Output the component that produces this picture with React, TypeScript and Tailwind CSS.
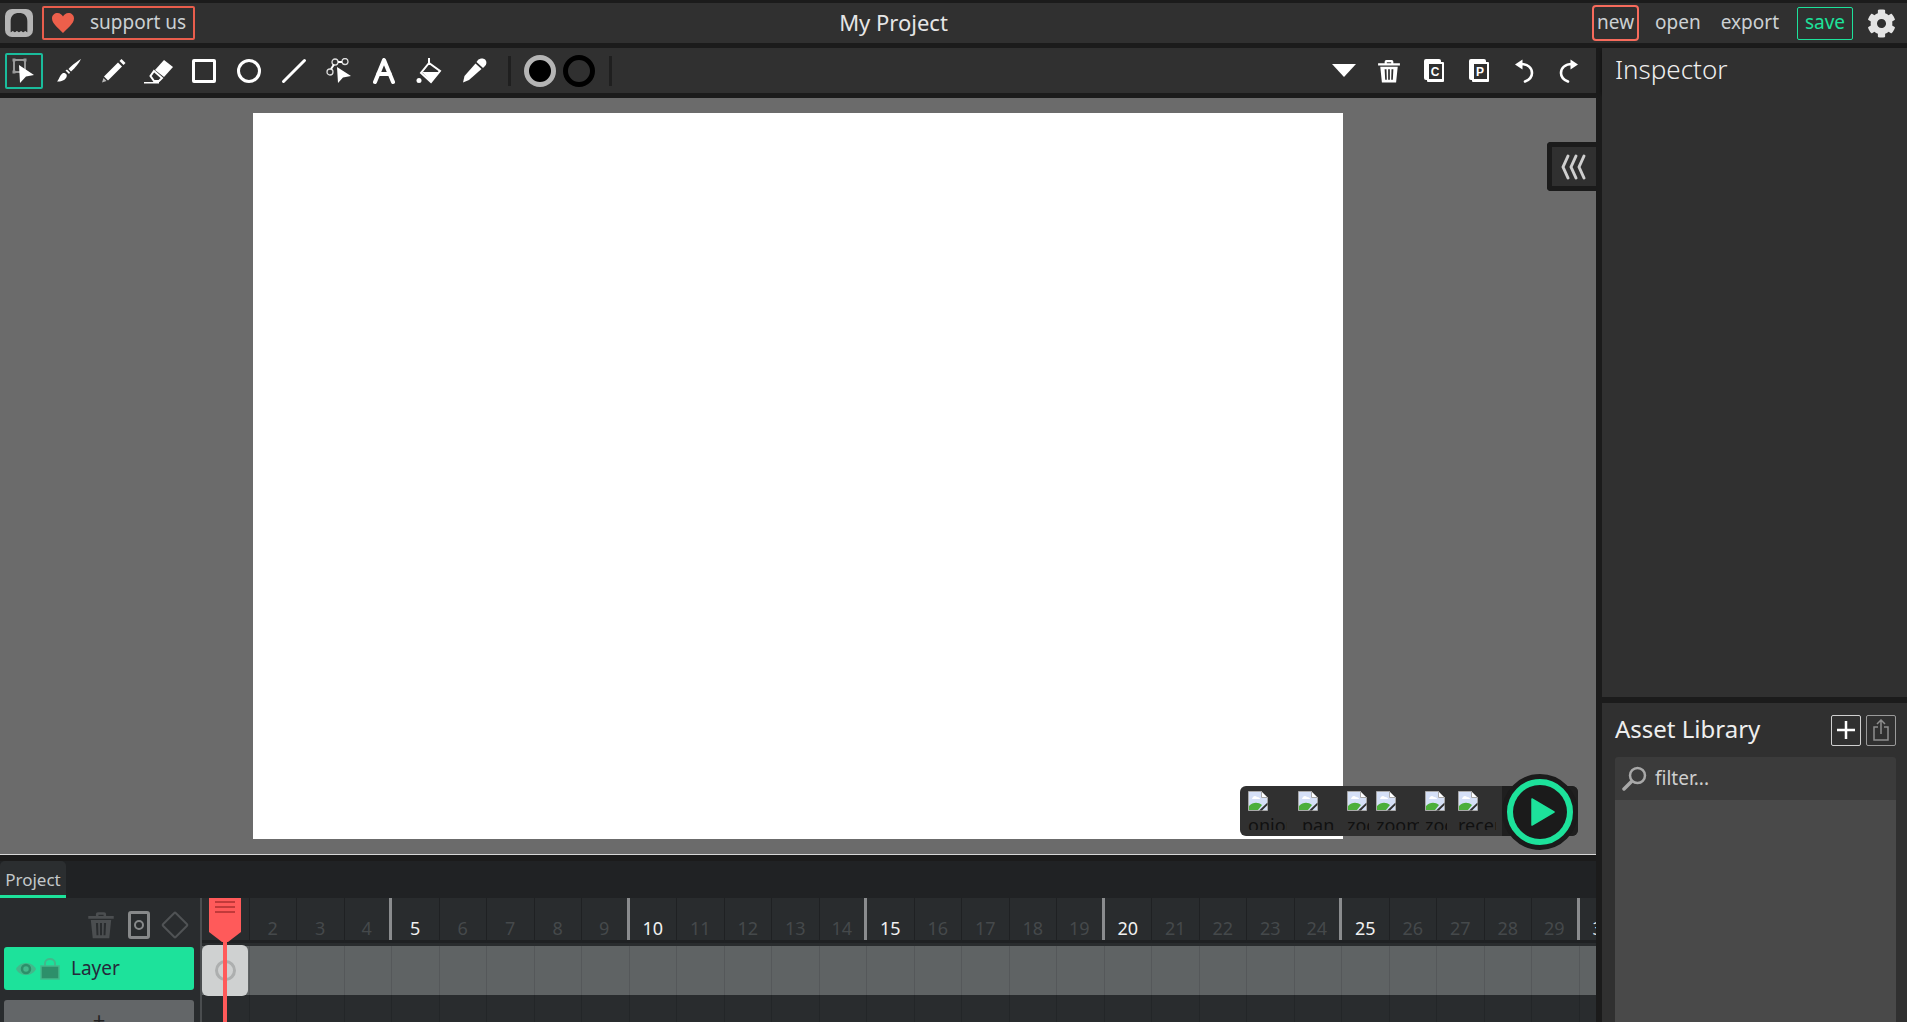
import { FaCog } from "react-icons/fa";

const font = "font-['Noto_Sans','Lato',sans-serif]";

function SelectIcon() {
  return (
    <svg width="24" height="26" viewBox="0 0 24 26" fill="none">
      <rect x="2" y="2" width="11" height="12" stroke="#ddd" strokeWidth="1.2" />
      <path d="M7 7 L22 17 L14 18.5 L8 25 Z" fill="#fff" />
      <rect x="0.5" y="0.5" width="3" height="3" fill="#999" />
      <rect x="11.5" y="0.5" width="3" height="3" fill="#999" />
      <rect x="0.5" y="12.5" width="3" height="3" fill="#999" />
    </svg>
  );
}

function BrushIcon() {
  return (
    <svg width="26" height="26" viewBox="0 0 26 26" fill="#fff">
      <path d="M25 1 C22 3 16 7 12.500 11 L15 13.500 C19 10 23 5 25 1 Z" />
      <path d="M9.500 12.500 L11 11.500 L14 14.500 L13 16 Z" />
      <path d="M7 15 C10 14.500 11.500 17 10.500 19 C9.500 22 5 24 1 23.500 C3 22 3.500 17 7 15 Z" />
    </svg>
  );
}

function PencilIcon() {
  return (
    <svg width="26" height="26" viewBox="0 0 26 26" fill="#fff">
      <path d="M20.500 1 L24.500 5 L22.500 7 L18.500 3 Z" />
      <path d="M17 4.500 L21 8.500 L7 22.500 L3 18.500 Z" />
      <path d="M2.500 20 L5.500 23 L1 24.500 Z" fill="#bbb" />
    </svg>
  );
}

function EraserIcon() {
  return (
    <svg width="32" height="26" viewBox="0 0 32 26" fill="#fff">
      <path d="M21 2 L30 9 L21 19 L12 12 Z" />
      <path d="M11 13 L19 20 L16 23 L11 23 L7.500 18 Z" fill="none" stroke="#fff" strokeWidth="2" />
      <path d="M1 24 H16 V25.500 H1 Z" />
    </svg>
  );
}

function PathIcon() {
  return (
    <svg width="26" height="26" viewBox="0 0 26 26" fill="none" stroke="#ddd" strokeWidth="1.3">
      <circle cx="4" cy="14" r="3" />
      <circle cx="9" cy="4" r="3" />
      <circle cx="19" cy="3.500" r="3" />
      <path d="M5 11 L8 6.500 M12 4 H16" strokeWidth="2" stroke="#fff" />
      <path d="M11 9 L25 18 L17 19.500 L12 25 Z" fill="#fff" stroke="none" />
    </svg>
  );
}

function FillIcon() {
  return (
    <svg width="26" height="28" viewBox="0 0 26 28" fill="#fff">
      <path d="M13 1 V8" stroke="#fff" strokeWidth="2" />
      <path d="M13 6 L24 14 L15 25 L5 16 Z" fill="none" stroke="#fff" strokeWidth="2" />
      <path d="M6 15 H23 L15 25 Z" />
      <circle cx="3" cy="23.500" r="2.500" />
    </svg>
  );
}

function DropperIcon() {
  return (
    <svg width="26" height="26" viewBox="0 0 26 26" fill="#fff">
      <path d="M17 2 C19 0 23 0 24.500 2 C26 4 25.500 6.500 24 8 L22 10 L15.500 4 Z" />
      <path d="M14.500 5.500 L20.500 11 L8 22 L2 24.500 L3.500 18 Z" />
    </svg>
  );
}

function TrashIcon({ color = "#fff", size = 24 }: { color?: string; size?: number }) {
  return (
    <svg width={size} height={size} viewBox="0 0 22 22" fill={color}>
      <path d="M7 2.500 A1.500 1.500 0 0 1 8.500 1 H13.500 A1.500 1.500 0 0 1 15 2.500 V4 H21 V6 H1 V4 H7 Z M9 3 V4 H13 V3 Z" fillRule="evenodd" />
      <path d="M3 7 H19 L17.500 21.500 H4.500 Z M7 9.500 L7.500 19 H9 L8.700 9.500 Z M10.200 9.500 V19 H11.800 V9.500 Z M13.300 9.500 L13 19 H14.500 L15 9.500 Z" fillRule="evenodd" />
    </svg>
  );
}

function ClipIcon({ letter }: { letter: string }) {
  return (
    <div className="relative h-[23px] w-5">
      <div className="absolute left-0 top-0 h-[21px] w-[17px] rounded-[2px] bg-white" />
      <div className="absolute bottom-0 right-0 h-[20px] w-[17px] rounded-[1px] bg-white" />
      <div className="absolute bottom-[3px] left-[5px] right-[2px] top-[5px] flex items-center justify-center bg-[#303030]">
        <span className="font-['Liberation_Sans',sans-serif] text-[12px] font-bold leading-none text-white">{letter}</span>
      </div>
    </div>
  );
}

function UndoIcon({ flip }: { flip?: boolean }) {
  return (
    <svg width="20" height="24" viewBox="0 0 20 24" fill="none" className={flip ? "-scale-x-100" : ""}>
      <path d="M7 5 C14 5 18 9 18 14 C18 18 15 21 11 22.500" stroke="#fff" strokeWidth="2.600" strokeLinecap="round" />
      <path d="M1 5.500 L8.500 0.500 V10.500 Z" fill="#fff" />
    </svg>
  );
}

function BrokenImage() {
  return (
    <svg width="20" height="20" viewBox="0 0 20 20" className="shrink-0">
      <path d="M0.500 0.500 H13.500 L19.500 6.500 V19.500 H0.500 Z" fill="#d5e0f7" stroke="#a9a9a9" />
      <path d="M13.500 0.500 V6.500 H19.500 Z" fill="#fff" stroke="#a9a9a9" />
      <path d="M4 8 C5 5 7 4 9 6 C11 6 12 7 12 8 Z" fill="#fff" />
      <path d="M1 19 V15 C5 11 10 11 14 14 L10 19 Z" fill="#4caf3a" />
      <path d="M11 19.500 L19.500 11.500 V14 L14 19.500 Z" fill="#303030" />
    </svg>
  );
}

function Tool({ children, active }: { children: React.ReactNode; active?: boolean }) {
  return (
    <div className={`flex h-9 w-[38px] shrink-0 items-center justify-center rounded-[2px] border-2 ${active ? "border-[#1abc9c]" : "border-transparent"}`}>
      {children}
    </div>
  );
}

const previews = [
  { alt: "onion", box: "ml-[8px] w-[39px] mr-[3px]", text: "" },
  { alt: "pan", box: "ml-[8px] w-[42px]", text: "ml-[4px]" },
  { alt: "zoom", box: "ml-[7px] w-[22px]", text: "" },
  { alt: "zoom", box: "ml-[7px] w-[43px] mr-[1px]", text: "" },
  { alt: "zoom", box: "ml-[5px] w-[22px]", text: "" },
  { alt: "recenter", box: "ml-[11px] w-[38px]", text: "" },
];

const frames = Array.from({ length: 31 }, (_, i) => i + 1);

function FrameCells({ line }: { line: string }) {
  return (
    <>
      {frames.map((f) => (
        <div key={f} className={`h-full w-[47.500px] shrink-0 border-r ${line}`} />
      ))}
    </>
  );
}

export default function App() {
  return (
    <div className={`${font} flex h-screen w-full flex-col overflow-hidden bg-[#1b1b1b] pt-[3px] text-[#ccd0d3]`}>
      {/* Top menu */}
      <header className="relative flex h-[40px] shrink-0 items-center bg-[#303030] pl-[5px] pr-[11px] text-[19px]">
        <div className="flex h-[28px] w-[28px] items-center justify-center rounded-[7px] bg-[#b5b5b5]">
          <svg width="18" height="20" viewBox="0 0 20 24" fill="#2b2b2b">
            <path d="M0 10 C0 3 4 0 10 0 C16 0 20 3 20 10 V23 C19 23 18.500 21.500 17.500 21.500 C16.500 21.500 16 23 15 23 C14 23 13.500 21.500 12.500 21.500 C11.500 21.500 11 23 10 23 C9 23 8.500 21.500 7.500 21.500 C6.500 21.500 6 23 5 23 C4 23 3.500 21.500 2.500 21.500 C1.500 21.500 1 23 0 23 Z" />
          </svg>
        </div>
        <div className="ml-[9px] flex h-[34px] w-[153px] items-center rounded-[2px] border-2 border-[#e85d4c] pl-[7px]">
          <svg width="24" height="22" viewBox="0 0 24 24" fill="#ec5f4b">
            <path d="M12 23 C8 18 0 13 0 7 C0 3 3 1 6 1 C9 1 11 3 12 5 C13 3 15 1 18 1 C21 1 24 3 24 7 C24 13 16 18 12 23 Z" />
          </svg>
          <span className="ml-[15px] whitespace-nowrap pb-[2px]">support us</span>
        </div>
        <div className="absolute left-0 w-[1787px] pb-[1px] text-center text-[22px] text-[#e6e6e6]">My Project</div>
        <div className="ml-auto flex items-center">
          <div className="flex h-9 w-[47px] items-center justify-center rounded-[4px] border-2 border-[#f76b5c] pb-[2px]">new</div>
          <span className="ml-4 pb-[2px]">open</span>
          <span className="ml-5 pb-[2px]">export</span>
          <div className="ml-[18px] flex h-[33px] w-[56px] items-center justify-center rounded-[2px] border border-[#1de29b] pb-[2px] text-[#1de29b]">save</div>
          <FaCog className="ml-[14px] text-[#e4e4e4]" size={29} />
        </div>
      </header>

      <div className="flex min-h-0 flex-1 gap-[6px] pt-[5px]">
        {/* Left column */}
        <div className="flex w-[1596px] shrink-0 flex-col">
          {/* Toolbar */}
          <div className="flex h-[45px] shrink-0 items-center bg-[#303030] pl-[5px] pr-[5px]">
            <Tool active><SelectIcon /></Tool>
            <div className="ml-[7px] flex items-center gap-[7px]">
              <Tool><BrushIcon /></Tool>
              <Tool><PencilIcon /></Tool>
              <Tool><EraserIcon /></Tool>
              <Tool><div className="h-[24px] w-[24px] rounded-[2px] border-[3px] border-white" /></Tool>
              <Tool><div className="h-[24px] w-[24px] rounded-full border-[3px] border-white" /></Tool>
              <Tool>
                <svg width="26" height="26" viewBox="0 0 26 26"><path d="M2.500 23.500 L23.500 2.500" stroke="#fff" strokeWidth="3" strokeLinecap="round" /></svg>
              </Tool>
              <Tool><PathIcon /></Tool>
              <Tool>
                <svg width="22" height="26" viewBox="0 0 22 26" fill="none"><path d="M2 24 L11 2 L20 24 M5 16 H17" stroke="#fff" strokeWidth="4" strokeLinecap="round" strokeLinejoin="round" /></svg>
              </Tool>
              <Tool><FillIcon /></Tool>
              <Tool><DropperIcon /></Tool>
            </div>
            <div className="ml-[15px] h-[30px] w-[3px] bg-[#1f1f1f]" />
            <div className="ml-[13px] h-[32px] w-[32px] rounded-full border-[5px] border-[#b5b5b5] bg-black" />
            <div className="ml-[7px] h-[32px] w-[32px] rounded-full border-[5px] border-black" />
            <div className="ml-[14px] h-[30px] w-[3px] bg-[#1f1f1f]" />
            <div className="ml-auto flex items-center">
              {[
                <div key="menu" className="h-0 w-0 border-x-[12px] border-t-[13px] border-x-transparent border-t-white" />,
                <TrashIcon key="trash" />,
                <ClipIcon key="copy" letter="C" />,
                <ClipIcon key="paste" letter="P" />,
                <UndoIcon key="undo" />,
                <UndoIcon key="redo" flip />,
              ].map((icon, i) => (
                <div key={i} className="flex w-[45px] items-center justify-center">{icon}</div>
              ))}
            </div>
          </div>

          {/* Stage */}
          <div className="relative mt-[5px] flex h-[757px] shrink-0 justify-center border-b border-[#d8d8d8] bg-[#6b6b6b] pt-[15px]">
            <div className="h-[726px] w-[1090px] bg-white" />
            <div className="absolute right-0 top-[44px] flex h-[49px] w-[49px] items-center justify-center rounded-l-[4px] border-[5px] border-r-0 border-[#1b1b1b] bg-[#303030]">
              <svg width="26" height="26" viewBox="0 0 26 26" fill="none" stroke="#cfcfcf" strokeWidth="3" strokeLinecap="round" strokeLinejoin="round">
                <path d="M7 2 L2 13 L7 24 M15 2 L10 13 L15 24 M23 2 L18 13 L23 24" />
              </svg>
            </div>
            {/* Playback overlay */}
            <div className="absolute left-[1240px] top-[688px] h-[50px] w-[338px] overflow-hidden rounded-[6px] bg-[#303030]">
              <div className="flex h-[44px] items-start overflow-hidden text-[18px] leading-[22px] text-[#111]">
                {previews.map((p, i) => (
                  <div key={i} className={`${p.box} flex h-full shrink-0 flex-col overflow-hidden whitespace-nowrap pt-[5px]`}>
                    <BrokenImage />
                    <span className={`${p.text} mt-[3px]`}>{p.alt}</span>
                  </div>
                ))}
              </div>
              <div className="absolute bottom-0 right-0 top-0 w-[76px] bg-[#1f1f1f]" />
            </div>
            <div className="absolute left-[1502px] top-[676px] flex h-[76px] w-[76px] items-center justify-center rounded-full border-[5px] border-[#1b1b1b] bg-[#1de29b]">
              <div className="flex h-[54px] w-[54px] items-center justify-center rounded-full bg-[#1b1b1b] pl-[5px]">
                <svg width="24" height="28" viewBox="0 0 24 28"><path d="M1 1 L23 14 L1 27 Z" fill="#1de29b" stroke="#1de29b" strokeLinejoin="round" strokeWidth="1.500" /></svg>
              </div>
            </div>
          </div>

          {/* Timeline */}
          <div className="mt-[6px] flex min-h-0 flex-1 flex-col overflow-hidden">
            <div className="flex h-[37px] shrink-0 items-end bg-[#202224]">
              <div className="flex h-[37px] w-[66px] items-center justify-center rounded-t-[5px] border-b-[3px] border-[#1de29b] bg-[#2b2e30] pt-[3px] text-[17px] text-[#c4c8ca]">Project</div>
            </div>
            <div className="flex min-h-0 flex-1 bg-[#292c2e]">
              <div className="flex w-[200px] shrink-0 flex-col pl-1 pr-[6px]">
                <div className="flex h-[49px] shrink-0 items-center justify-end gap-[13px] pr-[9px] pt-[4px]">
                  <TrashIcon color="#4b4e50" size={28} />
                  <div className="flex h-[28px] w-[22px] items-center justify-center rounded-[3px] border-[3px] border-[#87898a]">
                    <div className="h-[10px] w-[10px] rounded-full border-[2.500px] border-[#87898a]" />
                  </div>
                  <div className="ml-[2px] h-[20px] w-[20px] rotate-45 rounded-[2px] border-[2px] border-[#505355]" />
                </div>
                <div className="flex h-[43px] shrink-0 items-center rounded-[3px] bg-[#1de29b] pl-[12px] text-[19px] text-[#25293a]">
                  <svg width="20" height="20" viewBox="0 0 20 20">
                    <path d="M0 10 C4 2 16 2 20 10 C16 18 4 18 0 10 Z" fill="#43b88b" />
                    <circle cx="10" cy="10" r="4" fill="none" stroke="#2d8f6a" strokeWidth="2.500" />
                  </svg>
                  <svg width="20" height="22" viewBox="0 0 20 22" className="ml-[4px]">
                    <path d="M5 9 V5 A5 4 0 0 1 15 5 V9" fill="none" stroke="#43b88b" strokeWidth="2" />
                    <rect x="1" y="8" width="18" height="13" fill="#2d8f6a" stroke="#43b88b" strokeWidth="1.500" />
                  </svg>
                  <span className="ml-[11px]">Layer</span>
                </div>
                <div className="mt-[10px] flex h-[60px] shrink-0 justify-center rounded-[3px] bg-[#636668] pt-[8px] text-[22px] leading-[22px] text-[#222]">+</div>
              </div>
              <div className="relative min-w-0 flex-1 border-l-2 border-[#4a4d4f]">
                <div className="flex h-[45px] overflow-hidden border-b-[3px] border-[#1f2123]">
                  {frames.map((f) => (
                    <div
                      key={f}
                      className={`flex h-full w-[47.500px] shrink-0 items-end justify-center text-[18px] leading-[24px] ${f % 5 === 4 ? "border-r-[3px] border-[#8a8c8e]" : "border-r border-[#1f2123]"} ${f % 5 === 0 ? "text-[#f0f0f0]" : "text-[#45494b]"}`}
                    >
                      {f === 1 ? "" : f}
                    </div>
                  ))}
                </div>
                <div className="mt-[3px] flex h-[49px] overflow-hidden bg-[#5f6364]"><FrameCells line="border-[#55585a]" /></div>
                <div className="flex h-[40px] overflow-hidden"><FrameCells line="border-[#232628]" /></div>
                {/* Keyframe and playhead */}
                <div className="absolute left-0 top-[47px] flex h-[51px] w-[46px] items-center justify-center rounded-[6px] bg-[#cfd1d1]">
                  <div className="h-[21px] w-[21px] rounded-full border-[3px] border-[#adafaf]" />
                </div>
                <div className="absolute left-[7px] top-0 flex w-[32px] flex-col items-center">
                  <svg width="32" height="44" viewBox="0 0 32 44">
                    <path d="M0 0 H32 V34 L19 44 H13 L0 34 Z" fill="#ff5a5a" />
                    <path d="M6 4 H26 M6 9 H26 M6 14 H26" stroke="#c23a3a" strokeWidth="2" />
                  </svg>
                  <div className="h-[90px] w-[4px] bg-[#ff5a5a]" />
                </div>
              </div>
            </div>
          </div>
        </div>

        {/* Right column */}
        <aside className="flex min-w-0 flex-1 flex-col">
          <div className="flex h-[45px] shrink-0 items-center bg-[#303030] pb-[2px] pl-[13px] text-[26px] font-light text-[#eee] shadow-[0_2px_4px_rgba(0,0,0,0.5)]">Inspector</div>
          <div className="h-[604px] shrink-0 bg-[#303030]" />
          <div className="mt-[6px] flex min-h-0 flex-1 flex-col bg-[#303030] pl-[13px] pr-[11px]">
            <div className="flex h-[54px] shrink-0 items-center justify-between text-[24px] text-[#eee]">
              <span className="pb-[2px]">Asset Library</span>
              <div className="flex gap-[5px]">
                <div className="flex h-[31px] w-[30px] items-center justify-center rounded-[2px] border border-[#d0d0d0]">
                  <svg width="18" height="18" viewBox="0 0 18 18"><path d="M9 0 V18 M0 9 H18" stroke="#fff" strokeWidth="2.500" /></svg>
                </div>
                <div className="flex h-[31px] w-[30px] items-center justify-center rounded-[2px] border border-[#9a9a9a]">
                  <svg width="16" height="22" viewBox="0 0 16 22" fill="none" stroke="#8d8d8d" strokeWidth="1.500">
                    <path d="M5 8 H1 V21 H15 V8 H11 M8 15 V1 M4 5 L8 1 L12 5" />
                  </svg>
                </div>
              </div>
            </div>
            <div className="flex h-[43px] shrink-0 items-center rounded-t-[3px] bg-[#3b3b3b] pl-[7px] text-[19px] text-[#cfcfcf]">
              <svg width="25" height="25" viewBox="0 0 25 25" fill="none" stroke="#a8a8a8">
                <circle cx="15.500" cy="9.500" r="7.500" strokeWidth="2.500" />
                <path d="M9.500 15.500 L2 23" strokeWidth="3.500" strokeLinecap="round" />
              </svg>
              <span className="ml-[8px]">filter...</span>
            </div>
            <div className="min-h-0 flex-1 bg-[#494949]" />
          </div>
        </aside>
      </div>
    </div>
  );
}
